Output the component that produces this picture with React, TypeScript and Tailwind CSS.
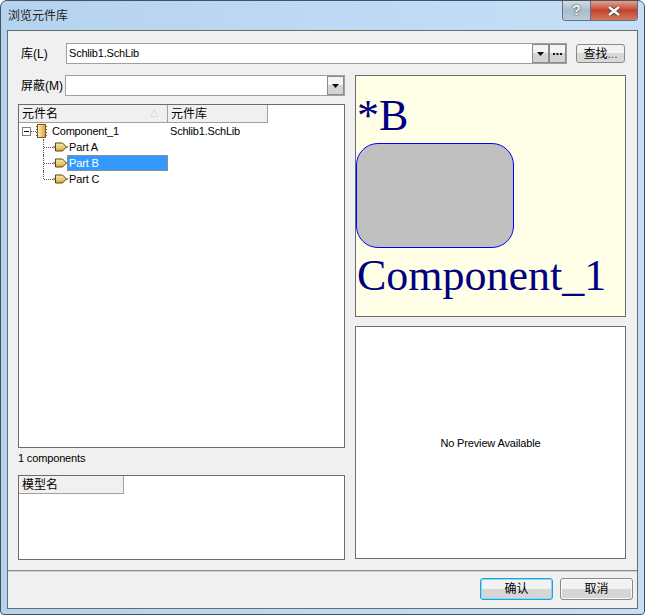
const ui = "font-['Liberation_Sans','Noto_Sans_CJK_SC',sans-serif]"

// ── Icons ─────────────────────────────────────────────────────────────────────

function PartIcon() {
  return (
    <svg width="14" height="10" viewBox="0 0 14 10" fill="none" className="shrink-0 overflow-visible">
      <defs>
        <linearGradient id="partFill" x1="0" y1="0" x2="0" y2="1">
          <stop offset="0" stopColor="#fbeeb8" />
          <stop offset="1" stopColor="#dca83c" />
        </linearGradient>
      </defs>
      <path d="M0 5h3" stroke="#333" strokeWidth="1" />
      <path d="M2.5 1h7l4 4-4 4h-7z" fill="url(#partFill)" stroke="#5a4210" strokeWidth="1" />
      <path d="M13.5 5H15" stroke="#222" strokeWidth="1" />
    </svg>
  )
}

function ComponentIcon() {
  return (
    <svg width="11" height="14" viewBox="0 0 11 14" fill="none" className="shrink-0">
      <defs>
        <linearGradient id="chipFill" x1="0" y1="0" x2="1" y2="0">
          <stop offset="0" stopColor="#fdf3c8" />
          <stop offset="1" stopColor="#dc9f35" />
        </linearGradient>
      </defs>
      <path d="M0 2.5h2M0 5.5h2M0 8.5h2M0 11.5h2M9 2.5h2M9 5.5h2M9 8.5h2M9 11.5h2" stroke="#555" strokeWidth="1" />
      <rect x="1.5" y="0.5" width="8" height="13" fill="url(#chipFill)" stroke="#7a5c18" />
    </svg>
  )
}

function Caret() {
  return (
    <svg width="7" height="4" viewBox="0 0 7 4">
      <path d="M0 0h7L3.5 4z" fill="#111" />
    </svg>
  )
}

function Dots() {
  return (
    <svg width="9" height="2" viewBox="0 0 9 2">
      <path d="M0 0h2v2H0zM3.5 0h2v2h-2zM7 0h2v2H7z" fill="#111" />
    </svg>
  )
}

// ── Small controls ────────────────────────────────────────────────────────────

function ComboButton({ children }: { children: React.ReactNode }) {
  return (
    <div className="flex h-full w-[17px] items-center justify-center border border-[#8a8a8a] bg-gradient-to-b from-[#f4f4f4] from-50% to-[#d4d4d4] to-50%">
      {children}
    </div>
  )
}

function DialogButton({ label, focused }: { label: string; focused?: boolean }) {
  return (
    <button
      className={`h-[22px] w-[73px] rounded-[3px] border bg-gradient-to-b from-[#f2f2f2] from-50% to-[#d6d6d6] to-50% text-[12px] text-black ${
        focused ? 'border-[#2a9ed8] shadow-[inset_0_0_0_1px_#7fdcf5]' : 'border-[#8a8a8a] shadow-[inset_0_0_0_1px_#f8f8f8]'
      }`}
    >
      {label}
    </button>
  )
}

function HeaderCell({ label, width, sort }: { label: string; width: string; sort?: boolean }) {
  return (
    <div className={`flex h-[18px] items-center justify-between border-b border-r border-[#a0a0a0] bg-[#f0f0f0] pl-[3px] pr-[9px] text-[12px] leading-none text-black ${width}`}>
      <span>{label}</span>
      {sort && <span className="text-[8px] text-[#b5b5b5]">△</span>}
    </div>
  )
}

function TreePart({ name, selected, last }: { name: string; selected?: boolean; last?: boolean }) {
  return (
    <div className="flex h-[16px] items-center pl-[24px]">
      <div className={`h-full w-0 self-start border-l border-dotted border-[#555] ${last ? 'max-h-[8px]' : ''}`} />
      <div className="w-[9px] border-t border-dotted border-[#555]" />
      <PartIcon />
      <span
        className={`flex h-full w-[101px] items-center text-[11px] tracking-[-0.15px] ${
          selected ? 'border border-dotted border-[#d98a2b] bg-[#3399ff] pl-[1px] text-white' : 'pl-[2px] text-black'
        }`}
      >
        {name}
      </span>
    </div>
  )
}

// ── App ───────────────────────────────────────────────────────────────────────

export default function App() {
  return (
    <div className={`relative flex h-[615px] w-[645px] flex-col overflow-hidden rounded-t-[7px] rounded-b-[4px] border border-[#46525e] bg-gradient-to-r from-[#b4d3ef] via-[#bcd9f5] to-[#c6dff7] px-[6px] pb-[5px] ${ui}`}>
      {/* title bar */}
      <div className="flex h-[29px] shrink-0 items-center justify-between">
        <span className="pl-[1px] text-[12px] text-[#222]">浏览元件库</span>
        <div className="mb-[8px] flex h-[20px] self-start overflow-hidden rounded-b-[4px] border border-t-0 border-[#5d6f80]">
          <div className="flex w-[27px] items-center justify-center bg-gradient-to-b from-[#d0dde9] via-[#a9bccd] to-[#bccbd9] text-[14px] font-bold text-[#f4f4f4] [text-shadow:0_0_2px_#222]">?</div>
          <div className="flex w-[47px] items-center justify-center border-l border-[#5d6f80] bg-gradient-to-b from-[#dfa08f] via-[#c2422c] to-[#d8765e]">
            <svg width="14" height="10" viewBox="0 0 14 10">
              <path d="M2 1l10 8M12 1L2 9" stroke="#444" strokeWidth="4" />
              <path d="M2 1l10 8M12 1L2 9" stroke="#fff" strokeWidth="2.4" />
            </svg>
          </div>
        </div>
      </div>

      {/* client area */}
      <div className="flex min-h-0 flex-1 flex-col border border-[#6c6c6c] bg-[#f0f0f0]">
        <div className="flex flex-1 flex-col px-[10px] pt-[12px]">
          {/* library row */}
          <div className="flex h-[21px] items-center">
            <span className="w-[48px] pl-[3px] text-[12px] text-black">库(L)</span>
            <div className="flex h-full w-[501px] items-center justify-between border border-[#a0a0a0] bg-white pl-[2px] text-[11px] tracking-[-0.2px] text-black">
              <span>Schlib1.SchLib</span>
              <div className="flex h-full">
                <ComboButton><Caret /></ComboButton>
                <ComboButton><Dots /></ComboButton>
              </div>
            </div>
            <button className="ml-[9px] h-[19px] w-[49px] rounded-[3px] border border-[#8a8a8a] bg-gradient-to-b from-[#f2f2f2] from-50% to-[#d8d8d8] to-50% text-[12px] leading-none text-black">
              查找<span className="text-[#555]">...</span>
            </button>
          </div>

          <div className="mt-[11px] grid flex-1 grid-cols-[327px_271px] gap-x-[10px]">
            {/* left column */}
            <div className="flex flex-col">
              <div className="flex h-[21px] items-center">
                <span className="w-[47px] pl-[3px] text-[12px] text-black">屏蔽(M)</span>
                <div className="flex h-full flex-1 justify-end border border-[#a0a0a0] bg-white">
                  <ComboButton><Caret /></ComboButton>
                </div>
              </div>

              <div className="mt-[8px] h-[344px] border border-[#6c6c6c] bg-white">
                <div className="flex">
                  <HeaderCell label="元件名" width="w-[149px]" sort />
                  <HeaderCell label="元件库" width="w-[100px]" />
                </div>
                <div className="flex h-[16px] items-center pl-[3px] text-[11px] tracking-[-0.2px] text-black">
                  <div className="flex h-[9px] w-[9px] items-center justify-center border border-[#808080] bg-white">
                    <div className="h-px w-[5px] bg-black" />
                  </div>
                  <div className="w-[5px] border-t border-dotted border-[#555]" />
                  <ComponentIcon />
                  <span className="ml-[5px] w-[118px]">Component_1</span>
                  <span>Schlib1.SchLib</span>
                </div>
                <TreePart name="Part A" />
                <TreePart name="Part B" selected />
                <TreePart name="Part C" last />
              </div>

              <p className="mt-[2px] h-[17px] text-[11px] leading-[17px] tracking-[-0.15px] text-black">1 components</p>

              <div className="mt-[8px] h-[85px] border border-[#6c6c6c] bg-white">
                <HeaderCell label="模型名" width="w-[105px]" />
              </div>
            </div>

            {/* right column */}
            <div className="flex flex-col gap-[9px]">
              <div className="h-[242px] overflow-hidden border border-[#6c6c6c] bg-[#ffffe8] font-['Liberation_Serif',serif] text-[44px] leading-none text-[#000080]">
                <div className="mt-[13px] h-[54px] pl-[1px] leading-[54px]">*B</div>
                <div className="h-[105px] w-[158px] rounded-[22px] border border-[#0000ff] bg-[#c0c0c0]" />
                <div className="mt-[2px] whitespace-nowrap pl-[1px] leading-[52px]">Component_1</div>
              </div>
              <div className="flex h-[233px] items-center justify-center border border-[#6c6c6c] bg-white pt-[2px] text-[11px] tracking-[-0.15px] text-black">
                No Preview Available
              </div>
            </div>
          </div>
        </div>

        {/* button bar */}
        <div className="flex h-[38px] shrink-0 items-center justify-end gap-[7px] border-t border-[#8a8a8a] pb-[2px] pr-[4px] shadow-[inset_0_1px_0_#d0d0d0]">
          <DialogButton label="确认" focused />
          <DialogButton label="取消" />
        </div>
      </div>
    </div>
  )
}
